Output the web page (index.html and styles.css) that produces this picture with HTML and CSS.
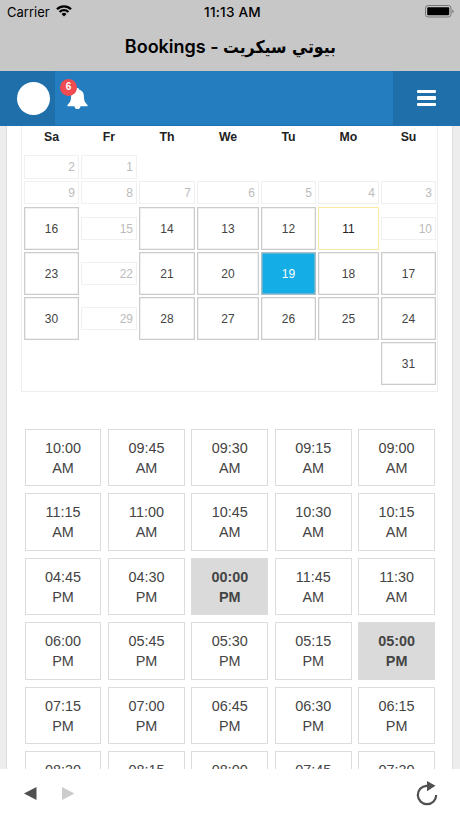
FILE: index.html
```html
<!DOCTYPE html>
<html lang="ar">
  <head>
    <meta charset="UTF-8" />
    <meta name="viewport" content="width=device-width, initial-scale=1.0" />
    <title>Bookings</title>
    <link rel="stylesheet" href="styles.css" />
  </head>
  <body>
    <div class="app">
      <header class="status">
        <div class="status-bar">
          <div class="carrier">
            <span>Carrier</span>
            <svg class="wifi" width="16" height="12" viewBox="0 0 16 12">
              <path d="M1 4.300a9.900 9.900 0 0 1 14 0M3.600 7a6.200 6.200 0 0 1 8.800 0" fill="none" stroke="#000" stroke-width="2.3" />
              <path d="M8 11.500L5.500 9a3.600 3.600 0 0 1 5 0z" />
            </svg>
          </div>
          <div class="clock">11:13 AM</div>
          <svg class="battery" width="29" height="13" viewBox="0 0 29 13">
            <rect x=".5" y=".5" width="25.5" height="11.5" rx="2.6" fill="none" stroke="#777" />
            <rect x="2.2" y="2.2" width="22" height="8" rx="1" />
            <path d="M27.3 4.5q1.3.4 1.3 1.8t-1.3 1.8z" fill="#777" />
          </svg>
        </div>
        <h1 class="title"><span class="en">Bookings -</span> <span class="ar">بيوتي سيكريت</span></h1>
      </header>

      <nav class="navbar">
        <a href="javascript:void(0)" class="avatar"><span></span></a>
        <a href="javascript:void(0)" class="bell">
          <svg width="21" height="23" viewBox="0 0 22 24">
            <path d="M11 1c-1 0-1.500.6-1.500 1.500C6 3.300 4.300 6 4.300 9.500c0 5-1.300 7.200-3.800 9.300V20h7.300c.3 2 1.500 3 3.200 3s2.900-1 3.200-3h7.300v-1.200c-2.500-2.100-3.800-4.300-3.800-9.300 0-3.500-1.700-6.200-5.200-7C12.500 1.600 12 1 11 1z" fill="#fff" />
          </svg>
          <span class="badge">6</span>
        </a>
        <a href="javascript:void(0)" class="menu-btn"><i></i><i></i><i></i></a>
      </nav>

      <main class="content" dir="rtl">
        <section class="calendar">
          <div class="days week-head">
            <b>Su</b><b>Mo</b><b>Tu</b><b>We</b><b>Th</b><b>Fr</b><b>Sa</b>
          </div>
          <div class="days dates">
            <span class="off first">1</span><span class="off">2</span>
            <span class="off">3</span><span class="off">4</span><span class="off">5</span><span class="off">6</span><span class="off">7</span><span class="off">8</span><span class="off">9</span>
            <span class="off">10</span><a class="today">11</a><a>12</a><a>13</a><a>14</a><span class="off">15</span><a>16</a>
            <a>17</a><a>18</a><a class="selected">19</a><a>20</a><a>21</a><span class="off">22</span><a>23</a>
            <a>24</a><a>25</a><a>26</a><a>27</a><a>28</a><span class="off">29</span><a>30</a>
            <a>31</a>
          </div>
        </section>

        <section class="slots">
          <a>09:00 AM</a><a>09:15 AM</a><a>09:30 AM</a><a>09:45 AM</a><a>10:00 AM</a>
          <a>10:15 AM</a><a>10:30 AM</a><a>10:45 AM</a><a>11:00 AM</a><a>11:15 AM</a>
          <a>11:30 AM</a><a>11:45 AM</a><a class="booked">00:00 PM</a><a>04:30 PM</a><a>04:45 PM</a>
          <a class="booked">05:00 PM</a><a>05:15 PM</a><a>05:30 PM</a><a>05:45 PM</a><a>06:00 PM</a>
          <a>06:15 PM</a><a>06:30 PM</a><a>06:45 PM</a><a>07:00 PM</a><a>07:15 PM</a>
          <a>07:30 PM</a><a>07:45 PM</a><a>08:00 PM</a><a>08:15 PM</a><a>08:30 PM</a>
        </section>
      </main>

      <footer class="toolbar">
        <svg width="13" height="13" viewBox="0 0 13 13"><path d="M0 6.500L12.500 0v13z" fill="#505050" /></svg>
        <svg width="13" height="13" viewBox="0 0 13 13"><path d="M12.500 6.500L0 0v13z" fill="#ccc" /></svg>
        <svg class="reload" width="22" height="25" viewBox="0 0 22 25">
          <path d="M11.500 4.800H10.500A9.200 9.200 0 1 0 20.200 14" fill="none" stroke="#505050" stroke-width="2.2" />
          <path d="M11 0l8.500 4.700-8.500 5.500z" fill="#505050" />
        </svg>
      </footer>
    </div>
  </body>
</html>
```
FILE: styles.css
```css
* {
  box-sizing: border-box;
}
body {
  margin: 0;
  font-family: "Liberation Sans", Arial, sans-serif;
  color: #444;
}
.app {
  height: 818px;
  display: flex;
  flex-direction: column;
  overflow: hidden;
}

/* status bar + title */
.status {
  flex: none;
  height: 71px;
  background: #c7c7c7;
  color: #000;
  font-family: Inter, sans-serif;
}
.status-bar {
  display: grid;
  grid-template-columns: 1fr auto 1fr;
  align-items: center;
  height: 24px;
  padding: 0 6px 0 7px;
  font-size: 13px;
}
.carrier {
  display: flex;
  align-items: center;
  gap: 6px;
}
.wifi {
  margin-top: -2px;
}
.clock {
  padding-left: 4px;
  font-weight: 500;
  font-size: 13.6px;
  letter-spacing: 0.2px;
}
.battery {
  justify-self: end;
  margin-top: -1px;
}
.title {
  margin: 0;
  height: 46px;
  line-height: 46px;
  font-size: 18px;
  font-weight: 600;
  text-align: center;
  white-space: nowrap;
}
.title .ar {
  font-family: "DejaVu Sans", sans-serif;
  font-size: 17.5px;
  display: inline-block;
  width: 112px;
  line-height: 30px;
  transform: scaleX(0.9);
  transform-origin: left;
}

/* navbar */
.navbar {
  flex: none;
  display: flex;
  height: 55px;
  background: #247dbe;
  border-bottom: 1px solid #1f72b0;
}
.avatar {
  display: flex;
  align-items: center;
  justify-content: center;
  width: 55px;
  padding-left: 11px;
  background: #1f70aa;
}
.avatar span {
  width: 33px;
  height: 33px;
  border-radius: 50%;
  background: #fff;
}
.bell {
  position: relative;
  padding: 16px 0 0 11.5px;
}
.badge {
  position: absolute;
  left: 5px;
  top: 8px;
  width: 17px;
  height: 17px;
  border-radius: 50%;
  background: #ef4b50;
  color: #fff;
  font: bold 10px/16px "Liberation Sans", sans-serif;
  text-align: center;
}
.menu-btn {
  display: flex;
  flex-direction: column;
  align-items: center;
  justify-content: center;
  gap: 3px;
  width: 67px;
  margin-left: auto;
  background: #1f6faa;
}
.menu-btn i {
  width: 19px;
  height: 3.5px;
  border-radius: 1px;
  background: #fff;
}

/* content card */
.content {
  flex: 1;
  min-height: 0;
  overflow: hidden;
  margin: 0;
  padding: 0 14px;
  border: solid #ededed;
  border-width: 0 7px 0 6px;
  background: #fff;
  box-shadow: inset 1px 0 #ddd, inset -1px 0 #ddd;
}
.calendar {
  width: 417px;
  height: 266px;
  margin-right: 1px;
  padding: 0 1px;
  border: 1px solid #eee;
  border-top: 0;
}
.days {
  display: grid;
  grid-template-columns: 55px 61px 55px 62px 56px 56px 55px;
  column-gap: 2px;
}
.week-head {
  height: 29.3px;
  line-height: 23px;
  font-size: 12.3px;
  text-align: center;
  color: #222;
}
.dates {
  grid-template-rows: 23.4px 23.4px repeat(4, 42.8px);
  row-gap: 2.4px;
  align-items: center;
  font-size: 12px;
}
.dates a {
  height: 100%;
  border: 1px solid #ccc;
  box-shadow: inset 0 0 0 0.5px #e4e4e4;
  line-height: 42px;
  text-align: center;
}
.dates .off {
  height: 23.4px;
  padding: 0 3px;
  border: 1px solid #f0f0f0;
  line-height: 22px;
  text-align: right;
  direction: ltr;
  color: #bbb;
}
.dates .first {
  grid-column: 6;
}
.dates .today {
  border-color: #fbeaa0;
  box-shadow: none;
  color: #222;
}
.dates .selected {
  background: #14ade5;
  border-color: #a9bdc5;
  box-shadow: inset 0 0 0 0.5px #a9bdc5;
  color: #fff;
}

/* time slots */
.slots {
  display: grid;
  grid-template-columns: repeat(5, 76.8px);
  grid-auto-rows: 57.4px;
  gap: 7px 6.6px;
  margin: 37px 4px 0 0;
}
.slots a {
  padding: 8px 18px;
  border: 1px solid #dcdcdc;
  font-size: 14.4px;
  line-height: 20px;
  text-align: center;
  direction: ltr;
}
.slots .booked {
  padding: 8px 15px;
  background: #dadada;
  font-weight: bold;
}

/* browser toolbar */
.toolbar {
  flex: none;
  display: flex;
  align-items: center;
  gap: 25px;
  height: 49px;
  padding: 0 22px 0 24px;
  background: #fff;
}
.reload {
  margin-left: auto;
}
```
